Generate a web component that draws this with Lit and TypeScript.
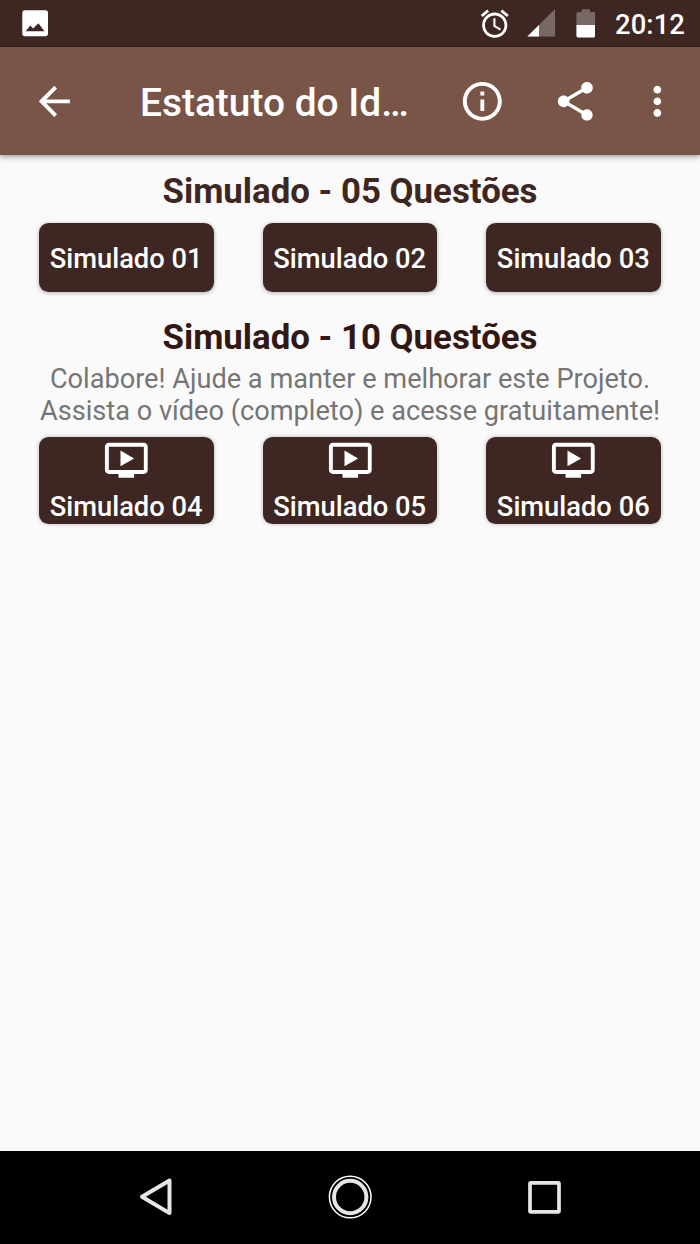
import { LitElement, html, css, svg } from "lit";
import { customElement, property } from "lit/decorators.js";

@customElement("status-bar")
class StatusBar extends LitElement {
  static styles = css`
    :host { display: flex; align-items: center; box-sizing: border-box; height: 46.6px; padding: 0 15px 0 22px; background: #3e2723; color: #fff; }
    svg { display: block; flex: none; }
    .spacer { flex: 1; }
    .alarm { margin-right: 16px; }
    .signal { margin-right: 20.5px; }
    .battery { margin-right: 20px; }
    .time { font-size: 27.4px; font-weight: 500; line-height: 32px; letter-spacing: 0.1px; padding-top: 3px; }
  `;
  render() {
    return html`
      <svg width="26.5" height="26.5" viewBox="0 0 26.5 26.5">
        <rect x=".3" y=".3" width="25.7" height="25.9" rx="2.6" fill="#fff" />
        <path d="M3.7 21.3L8.3 15.4l2.8 3.2 5.3-5.3 6.1 8z" fill="#3e2723" />
      </svg>
      <div class="spacer"></div>
      <svg class="alarm" width="33.5" height="33.5" viewBox="0 0 24 24">
        <path fill="#fff" d="M22 5.72l-4.6-3.86-1.29 1.53 4.6 3.86L22 5.72zM7.88 3.39L6.6 1.86 2 5.71l1.29 1.53 4.59-3.85zM12.5 8H11v6l4.75 2.85.75-1.23-4-2.37V8zM12 4c-4.97 0-9 4.03-9 9s4.02 9 9 9c4.97 0 9-4.03 9-9s-4.03-9-9-9zm0 16c-3.87 0-7-3.13-7-7s3.13-7 7-7 7 3.13 7 7-3.13 7-7 7z" />
      </svg>
      <svg class="signal" width="28" height="28" viewBox="0 0 28 28">
        <path fill="#fff" fill-opacity=".3" d="M28 0v27.5H.3z" />
        <path fill="#fff" d="M.3 27.5L12 15.9v11.6z" />
      </svg>
      <svg class="battery" width="19.5" height="29" viewBox="0 0 19.5 29">
        <path fill="#fff" fill-opacity=".3" d="M.4 16V5Q.4 3 2.2 3H5.5V1.3Q5.5.3 6.5.3h6.6q1 0 1 1V3h3.3q1.8 0 1.8 2v11z" />
        <path fill="#fff" d="M.4 16h18.8v10.8q0 1.8-1.6 1.8H2Q.4 28.6 .4 26.8z" />
      </svg>
      <span class="time">20:12</span>
    `;
  }
}

@customElement("app-bar")
class AppBar extends LitElement {
  static styles = css`
    :host { display: flex; align-items: center; box-sizing: border-box; height: 108.7px; padding: 0 19.5px 0 31.3px; background: #795548; color: #fff; box-shadow: 0 1px 5px rgba(0, 0, 0, 0.38), 0 3px 8px rgba(0, 0, 0, 0.1); z-index: 1; }
    svg { display: block; flex: none; width: 46.67px; height: 46.67px; fill: #fff; }
    .title { flex: 1; margin: 0 0 0 62px; font-size: 38.9px; font-weight: 500; line-height: 46px; padding-top: 4px; white-space: nowrap; }
    .actions { display: flex; margin-left: -10px; }
    .share { margin-left: 46px; }
    .more { margin-left: 35.3px; }
  `;
  render() {
    return html`
      <svg viewBox="0 0 24 24"><path d="M20 11H7.83l5.59-5.59L12 4l-8 8 8 8 1.41-1.41L7.83 13H20v-2z" /></svg>
      <h1 class="title">Estatuto do Id…</h1>
      <div class="actions">
        <svg viewBox="0 0 24 24"><path d="M11 17h2v-6h-2v6zm1-15C6.48 2 2 6.48 2 12s4.48 10 10 10 10-4.48 10-10S17.52 2 12 2zm0 18c-4.41 0-8-3.59-8-8s3.59-8 8-8 8 3.59 8 8-3.59 8-8 8zM11 9h2V7h-2v2z" /></svg>
        <svg class="share" viewBox="0 0 24 24"><path d="M18 16.08c-.76 0-1.44.3-1.96.77L8.91 12.7c.05-.23.09-.46.09-.7s-.04-.47-.09-.7l7.05-4.11c.54.5 1.25.81 2.04.81 1.66 0 3-1.34 3-3s-1.34-3-3-3-3 1.34-3 3c0 .24.04.47.09.7L8.04 9.81C7.5 9.31 6.79 9 6 9c-1.66 0-3 1.34-3 3s1.34 3 3 3c.79 0 1.5-.31 2.04-.81l7.12 4.16c-.05.21-.08.43-.08.65 0 1.61 1.31 2.92 2.92 2.92s2.92-1.31 2.92-2.92-1.31-2.92-2.92-2.92z" /></svg>
        <svg class="more" viewBox="0 0 24 24"><path d="M12 8c1.1 0 2-.9 2-2s-.9-2-2-2-2 .9-2 2 .9 2 2 2zm0 2c-1.1 0-2 .9-2 2s.9 2 2 2 2-.9 2-2-.9-2-2-2zm0 6c-1.1 0-2 .9-2 2s.9 2 2 2 2-.9 2-2-.9-2-2-2z" /></svg>
      </div>
    `;
  }
}

@customElement("quiz-button")
class QuizButton extends LitElement {
  @property() label = "";
  @property({ type: Boolean }) video = false;
  static styles = css`
    :host { display: block; }
    button { display: flex; flex-direction: column; align-items: center; justify-content: center; box-sizing: border-box; width: 100%; height: 69.4px; margin: 0; padding: 4px 0.6px 0 0; border: 0; border-radius: 9.7px; background: #3e2723; color: #fff; font: 500 27.3px/32px Roboto, sans-serif; white-space: nowrap; box-shadow: 0 1px 4px rgba(0, 0, 0, 0.32); }
    .video { height: 86.6px; justify-content: flex-start; padding: 0 0.6px 0 0; box-shadow: 0 0 4px rgba(0, 0, 0, 0.28); }
    svg { display: block; flex: none; width: 46.67px; height: 46.67px; margin: 0 0 0 0.6px; fill: #fff; }
    .label { display: block; }
    .video .label { margin-top: 6.6px; }
  `;
  render() {
    return html`<button class=${this.video ? "video" : ""}>
      ${this.video
        ? html`<svg viewBox="0 0 24 24">${svg`<path d="M21 3H3c-1.11 0-2 .89-2 2v12c0 1.1.89 2 2 2h5v2h8v-2h5c1.1 0 1.99-.9 1.99-2L23 5c0-1.11-.9-2-2-2zm0 14H3V5h18v12zm-5-6l-7 4V7z" />`}</svg>`
        : ""}
      <span class="label">${this.label}</span>
    </button>`;
  }
}

@customElement("nav-bar")
class NavBar extends LitElement {
  static styles = css`
    :host { display: flex; align-items: center; justify-content: space-between; box-sizing: border-box; height: 93.5px; padding: 0 132px 0 133px; background: #000; }
    svg { display: block; width: 46px; height: 46px; fill: none; stroke: #e6e6e6; }
  `;
  render() {
    return html`
      <svg viewBox="0 0 46 46"><path d="M36.5 6.5v32.6L9 22.8z" stroke-width="4" stroke-linejoin="round" /></svg>
      <svg viewBox="0 0 46 46"><circle cx="22.2" cy="23" r="20.8" stroke="#fff" stroke-width="1.5" /><circle cx="22.2" cy="23" r="16.2" stroke-width="4" /></svg>
      <svg viewBox="0 0 46 46"><rect x="8" y="8.8" width="29" height="29" rx=".8" stroke-width="3.7" /></svg>
    `;
  }
}

@customElement("app-root")
class AppRoot extends LitElement {
  static styles = css`
    :host { display: flex; flex-direction: column; width: 700px; height: 1244px; overflow: hidden; background: #fafafa; font-family: Roboto, sans-serif; }
    main { flex: 1; padding: 16px 39.2px 0; }
    h2 { margin: 0; font-size: 34.85px; font-weight: 700; line-height: 41px; text-align: center; color: #3e2723; white-space: nowrap; }
    .second { margin-top: 25px; color: #321814; }
    p { margin: 5px -20px 0; font-size: 27.17px; line-height: 32px; text-align: center; color: #757575; white-space: nowrap; }
    .row { display: grid; grid-template-columns: repeat(3, 174.5px); justify-content: space-between; margin-top: 10.3px; }
  `;
  render() {
    return html`
      <status-bar></status-bar>
      <app-bar></app-bar>
      <main>
        <h2>Simulado - 05 Questões</h2>
        <div class="row">
          ${["01", "02", "03"].map((n) => html`<quiz-button label="Simulado ${n}"></quiz-button>`)}
        </div>
        <h2 class="second">Simulado - 10 Questões</h2>
        <p>Colabore! Ajude a manter e melhorar este Projeto.<br />Assista o vídeo (completo) e acesse gratuitamente!</p>
        <div class="row">
          ${["04", "05", "06"].map((n) => html`<quiz-button video label="Simulado ${n}"></quiz-button>`)}
        </div>
      </main>
      <nav-bar></nav-bar>
    `;
  }
}
